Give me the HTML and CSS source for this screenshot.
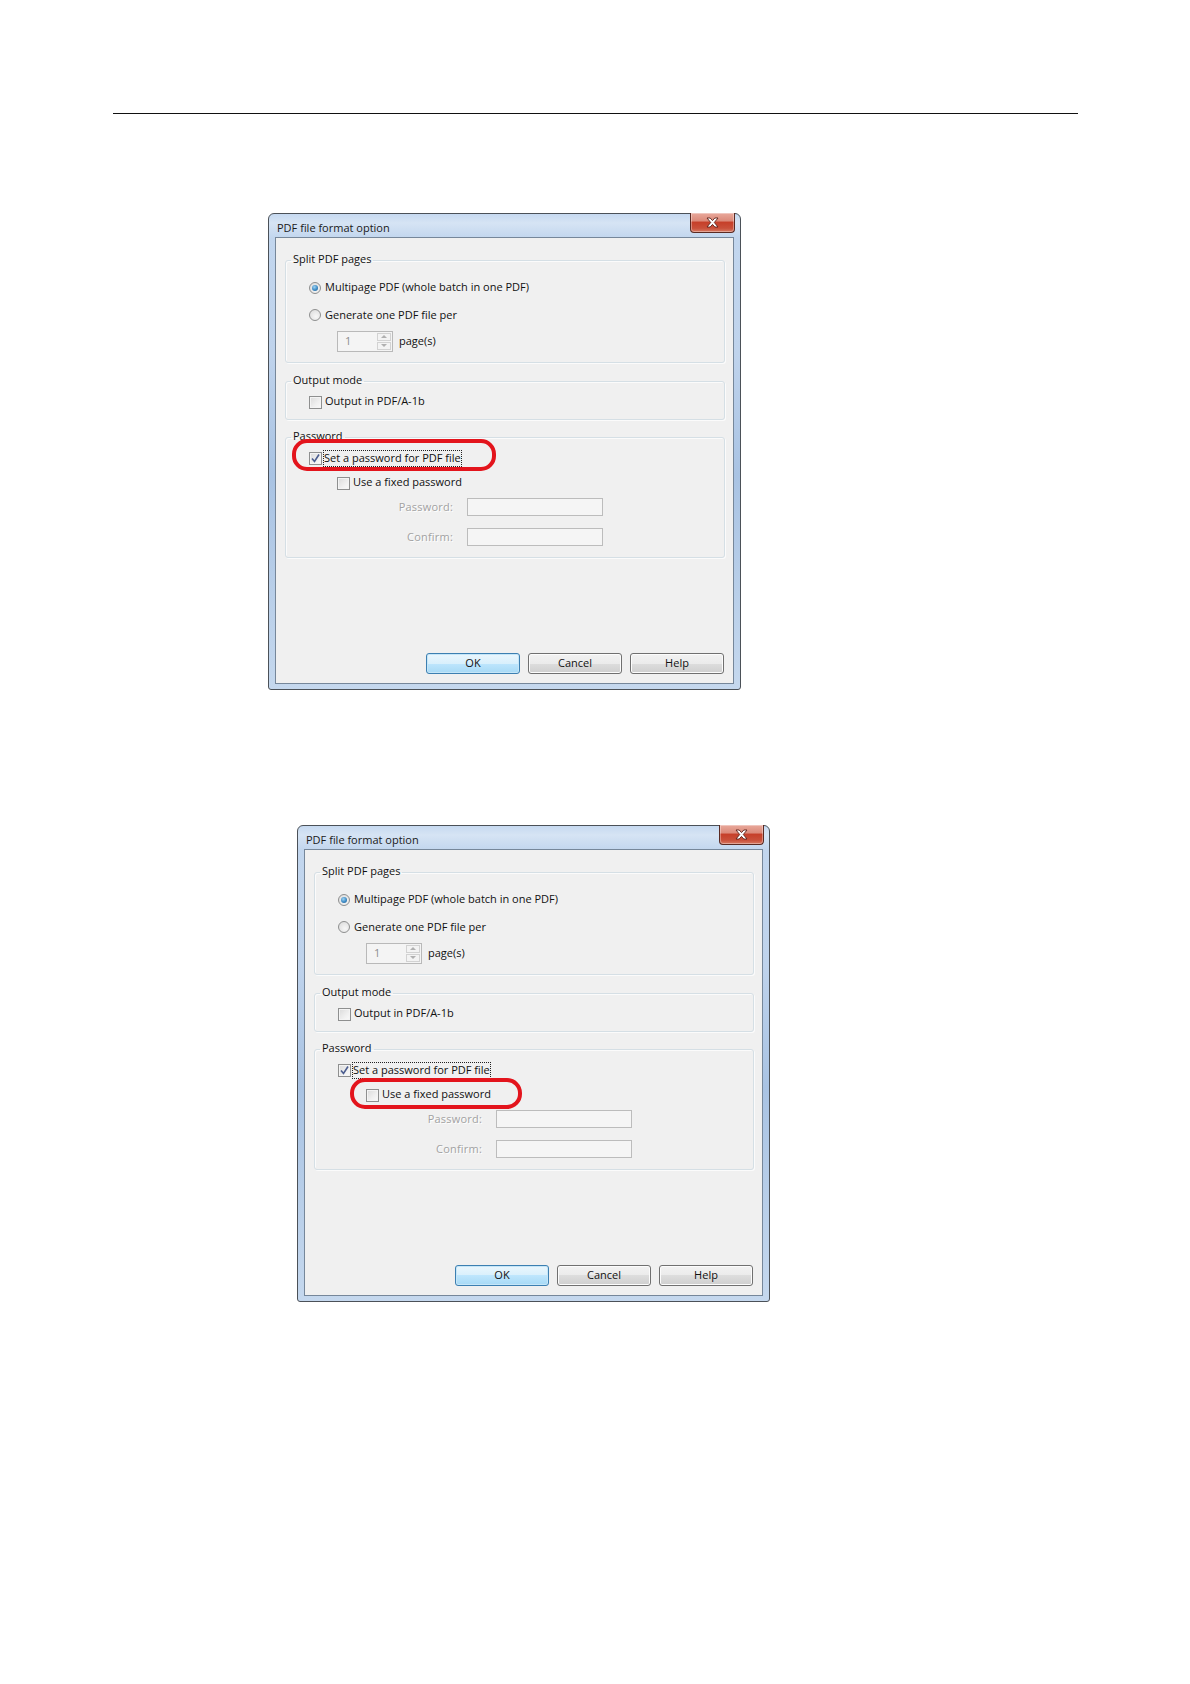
FILE: index.html
```html
<!DOCTYPE html>
<html>
<head>
<meta charset="utf-8">
<link rel="stylesheet" href="styles.css">
</head>
<body>
<div class="page">
  <hr class="rule">

  <div class="window win1">
    <div class="titlebar">
      <span class="title">PDF file format option</span>
      <span class="close"><svg width="13" height="11" viewBox="0 0 13 11"><path d="M1 1 L4.2 1 L6.5 3.6 L8.8 1 L12 1 L8.3 5.5 L12 10 L8.8 10 L6.5 7.4 L4.2 10 L1 10 L4.7 5.5 Z" fill="#fff" stroke="#5a2018" stroke-width="0.9" stroke-linejoin="round"/></svg></span>
    </div>
    <div class="client">
      <fieldset class="group g-split">
        <legend>Split PDF pages</legend>
        <div class="body">
          <div class="row"><span class="radio checked"></span><span class="txt">Multipage PDF (whole batch in one PDF)</span></div>
          <div class="row r2"><span class="radio"></span><span class="txt">Generate one PDF file per</span></div>
          <div class="row spinrow"><span class="spin"><span class="spin-val">1</span><span class="spin-btns"><span class="sb up"></span><span class="sb down"></span></span></span><span class="txt">page(s)</span></div>
        </div>
      </fieldset>
      <fieldset class="group g-output">
        <legend>Output mode</legend>
        <div class="body">
          <div class="row"><span class="check"></span><span class="txt">Output in PDF/A-1b</span></div>
        </div>
      </fieldset>
      <fieldset class="group g-pass">
        <legend>Password</legend>
        <div class="body">
          <div class="row hl-row"><span class="check checked"><svg width="11" height="11" viewBox="0 0 11 11"><path d="M2 5.5 L4.5 8.5 L9 1.5" fill="none" stroke="#4b5d8f" stroke-width="1.6"/></svg></span><span class="txt focus">Set a password for PDF file</span><span class="oval oval1"></span></div>
          <div class="row r-fixed"><span class="check"></span><span class="txt">Use a fixed password</span></div>
          <div class="field-row f1"><span class="flabel">Password:</span><span class="input"></span></div>
          <div class="field-row f2"><span class="flabel">Confirm:</span><span class="input"></span></div>
        </div>
      </fieldset>
      <div class="buttons">
        <span class="btn default">OK</span>
        <span class="btn">Cancel</span>
        <span class="btn">Help</span>
      </div>
    </div>
  </div>

  <div class="window win2">
    <div class="titlebar">
      <span class="title">PDF file format option</span>
      <span class="close"><svg width="13" height="11" viewBox="0 0 13 11"><path d="M1 1 L4.2 1 L6.5 3.6 L8.8 1 L12 1 L8.3 5.5 L12 10 L8.8 10 L6.5 7.4 L4.2 10 L1 10 L4.7 5.5 Z" fill="#fff" stroke="#5a2018" stroke-width="0.9" stroke-linejoin="round"/></svg></span>
    </div>
    <div class="client">
      <fieldset class="group g-split">
        <legend>Split PDF pages</legend>
        <div class="body">
          <div class="row"><span class="radio checked"></span><span class="txt">Multipage PDF (whole batch in one PDF)</span></div>
          <div class="row r2"><span class="radio"></span><span class="txt">Generate one PDF file per</span></div>
          <div class="row spinrow"><span class="spin"><span class="spin-val">1</span><span class="spin-btns"><span class="sb up"></span><span class="sb down"></span></span></span><span class="txt">page(s)</span></div>
        </div>
      </fieldset>
      <fieldset class="group g-output">
        <legend>Output mode</legend>
        <div class="body">
          <div class="row"><span class="check"></span><span class="txt">Output in PDF/A-1b</span></div>
        </div>
      </fieldset>
      <fieldset class="group g-pass">
        <legend>Password</legend>
        <div class="body">
          <div class="row"><span class="check checked"><svg width="11" height="11" viewBox="0 0 11 11"><path d="M2 5.5 L4.5 8.5 L9 1.5" fill="none" stroke="#4b5d8f" stroke-width="1.6"/></svg></span><span class="txt focus">Set a password for PDF file</span></div>
          <div class="row r-fixed hl-row"><span class="check"></span><span class="txt">Use a fixed password</span><span class="oval oval2"></span></div>
          <div class="field-row f1"><span class="flabel">Password:</span><span class="input"></span></div>
          <div class="field-row f2"><span class="flabel">Confirm:</span><span class="input"></span></div>
        </div>
      </fieldset>
      <div class="buttons">
        <span class="btn default">OK</span>
        <span class="btn">Cancel</span>
        <span class="btn">Help</span>
      </div>
    </div>
  </div>
</div>
</body>
</html>
```

FILE: styles.css
```css
* { box-sizing: border-box; }
html, body { margin: 0; padding: 0; background: #fff; }
body {
  font-family: "Open Sans", "Noto Sans", "DejaVu Sans", sans-serif;
  font-size: 11px;
  color: #111;
}
.page { width: 1190px; min-height: 1684px; padding-top: 113px; }
.rule { margin: 0 0 0 113px; width: 965px; height: 1px; border: 0; background: #111; }

.window {
  width: 473px;
  height: 477px;
  border: 1px solid #4b5158;
  border-radius: 6px 6px 3px 3px;
  padding: 0 6px 5px 6px;
  display: flex;
  flex-direction: column;
  background: linear-gradient(180deg, #c6d9f0 0, #d6e4f4 9px, #c2d6ee 24px, #bfd3ec 140px, #a9c3e3 55%, #b9cfe9 80%, #c5d8ee 100%);
}
.win1 { margin: 99px 0 0 268px; }
.win2 { margin: 135px 0 0 297px; }

.titlebar { height: 23px; display: flex; align-items: flex-start; }
.title { padding: 6px 0 0 2px; line-height: 15px; font-size: 11px; color: #1a1a1a; }
.close {
  margin: -1px -1px 0 auto;
  width: 45px;
  height: 20px;
  border: 1px solid #5a2a22;
  border-top: 0;
  border-radius: 0 0 4px 4px;
  background: linear-gradient(180deg, #e9a99c 0, #dc8b7b 40%, #c6402a 50%, #c9503a 80%, #d87a62 100%);
  box-shadow: inset 0 0 0 1px rgba(255,255,255,0.35);
  display: flex;
  align-items: center;
  justify-content: center;
}

.client {
  flex: 1;
  border: 1px solid #76879a;
  background: #f0f0f0;
  display: flex;
  flex-direction: column;
  padding: 0 8px 9px 9px;
}

.group {
  margin: 0;
  padding: 0;
  border: 1px solid #d5dfe5;
  border-radius: 3px;
  box-shadow: inset 1px 1px 0 #fbfbfb, 1px 1px 0 #fbfbfb;
  min-width: 0;
}
.group legend {
  margin-left: 5px;
  padding: 0 2px 3px 2px;
  line-height: 12px;
  font-size: 11px;
}
.g-split { margin-top: 15px; }
.g-output { margin-top: 11px; }
.g-pass { margin-top: 10px; }
.g-split .body { padding: 12px 0 10px 23px; }
.g-output .body { padding: 5px 0 9px 23px; }
.g-pass .body { padding: 5px 0 11px 23px; }

.row { position: relative; display: flex; align-items: center; height: 16px; }
.r2 { margin-top: 11px; }
.spinrow { margin-top: 8px; height: 21px; padding-left: 28px; }
.r-fixed { margin-top: 9px; margin-left: 28px; }
.txt { white-space: nowrap; line-height: 14px; padding-bottom: 2px; }
.r2 .txt { padding-bottom: 1px; }

.radio {
  width: 12px; height: 12px; border-radius: 50%;
  border: 1px solid #8e8f8f;
  background: radial-gradient(circle at 60% 65%, #f7f7f7 0, #e2e2e2 70%, #d0d0d0 100%);
  margin-right: 4px;
  flex: none;
  display: flex; align-items: center; justify-content: center;
}
.radio.checked::after {
  content: "";
  width: 6px; height: 6px; border-radius: 50%;
  background: radial-gradient(circle at 40% 35%, #9fd4f3 0, #3d8ac4 55%, #1f5b8c 100%);
}

.check {
  width: 13px; height: 13px;
  border: 1px solid #8e8f8f;
  background: linear-gradient(135deg, #dadada 0, #f0f0f0 60%, #fafafa 100%);
  box-shadow: inset 0 0 0 1px #f4f4f4;
  margin-right: 3px;
  flex: none;
  display: flex; align-items: center; justify-content: center;
}
.check svg { display: block; }
.focus { border: 1px dotted #222; padding: 0 0 1px 0; margin-left: -2px; line-height: 14px; }

.spin {
  width: 56px; height: 21px;
  border: 1px solid #b9b9b9;
  background: #f4f4f4;
  display: flex;
  margin-right: 6px;
}
.spin-val { flex: 1; padding-left: 7px; line-height: 18px; color: #8c8c8c; }
.spin-btns { width: 15px; display: flex; flex-direction: column; padding: 1px 1px 1px 0; gap: 1px; }
.sb {
  flex: 1;
  border: 1px solid #d2d2d2;
  background: #f3f3f3;
  position: relative;
}
.sb::after {
  content: "";
  position: absolute; left: 50%; top: 50%;
  margin: -2px 0 0 -3px;
  border-left: 3px solid transparent; border-right: 3px solid transparent;
}
.up::after { border-bottom: 3px solid #b0b0b0; }
.down::after { border-top: 3px solid #b0b0b0; }

.field-row { display: flex; align-items: center; height: 18px; margin-left: 44px; }
.f1 { margin-top: 7px; }
.f2 { margin-top: 12px; }
.flabel { width: 100px; text-align: right; margin-right: 14px; color: #a2a2a2; text-shadow: 1px 1px 0 #fff; white-space: nowrap; letter-spacing: 0.2px; line-height: 14px; padding-bottom: 0; }
.input { width: 136px; height: 18px; border: 1px solid #bcbcbc; background: #f5f5f5; }

.oval {
  position: absolute;
  border: 4px solid #e3141c;
  border-radius: 15px;
  pointer-events: none;
}
.oval1 { left: -17px; top: -11px; width: 204px; height: 32px; }
.oval2 { left: -16px; top: -9px; width: 172px; height: 31px; }

.buttons { margin-top: auto; display: flex; justify-content: flex-end; gap: 8px; padding-right: 1px; }
.btn {
  width: 94px; height: 21px;
  border: 1px solid #707070;
  border-radius: 3px;
  background: linear-gradient(180deg, #f2f2f2 0, #ebebeb 50%, #dddddd 50%, #cfcfcf 100%);
  box-shadow: inset 0 0 0 1px #fcfcfc;
  text-align: center;
  line-height: 18px;
  font-size: 11px;
  color: #111;
}
.btn.default {
  border-color: #3c7fb1;
  background: linear-gradient(180deg, #eaf6fd 0, #d9f0fc 50%, #bee6fd 50%, #a7d9f5 100%);
  box-shadow: inset 0 0 0 1px #c5e6f8;
}
```
